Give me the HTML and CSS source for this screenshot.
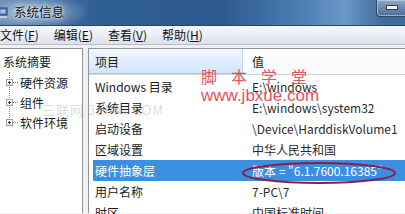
FILE: index.html
```html
<!DOCTYPE html>
<html lang="zh">
<head>
<meta charset="utf-8">
<link rel="stylesheet" href="styles.css">
</head>
<body>
<div class="window">
  <div class="titlebar">
    <svg class="app-icon" width="9" height="11" viewBox="0 0 9 11">
      <rect x="0" y="1" width="8" height="7" fill="#5a79b8" stroke="#2a3f70" stroke-width="1"/>
      <rect x="1.5" y="2.5" width="5" height="4" fill="#9fc2ee"/>
      <rect x="1" y="9" width="7" height="2" fill="#c9ced8"/>
    </svg>
    <span class="title">系统信息</span>
    <div class="min-btn"><span class="dash"></span></div>
  </div>
  <div class="menubar">
    <span class="menu">文件(<u>F</u>)</span>
    <span class="menu">编辑(<u>E</u>)</span>
    <span class="menu">查看(<u>V</u>)</span>
    <span class="menu">帮助(<u>H</u>)</span>
  </div>
  <div class="content">
    <div class="tree">
      <div class="tree-root">系统摘要</div>
      <div class="tree-children">
        <div class="node"><span class="box"></span><span class="hdots"></span><span class="label">硬件资源</span></div>
        <div class="node"><span class="box"></span><span class="hdots"></span><span class="label">组件</span></div>
        <div class="node"><span class="box"></span><span class="hdots"></span><span class="label">软件环境</span></div>
      </div>
    </div>
    <div class="list">
      <div class="head">
        <div class="hcell c1">项目</div>
        <div class="hcell c2">值</div>
      </div>
      <div class="row"><div class="c1">Windows 目录</div><div class="c2">E:\windows</div></div>
      <div class="row"><div class="c1">系统目录</div><div class="c2">E:\windows\system32</div></div>
      <div class="row"><div class="c1">启动设备</div><div class="c2">\Device\HarddiskVolume1</div></div>
      <div class="row"><div class="c1">区域设置</div><div class="c2">中华人民共和国</div></div>
      <div class="row sel"><div class="c1">硬件抽象层</div><div class="c2">版本 = "6.1.7600.16385"</div></div>
      <div class="row"><div class="c1">用户名称</div><div class="c2">7-PC\7</div></div>
      <div class="row"><div class="c1">时区</div><div class="c2">中国标准时间</div></div>
    </div>
  </div>
  <svg class="ellipse" width="156" height="24" viewBox="0 0 156 24">
    <ellipse cx="78" cy="12" rx="76" ry="10" fill="none" stroke="#8b1e45" stroke-width="2"/>
  </svg>
  <div class="wm-red">
    <div class="wm-cn">脚本学堂</div>
    <div class="wm-url">www.jbxue.com</div>
  </div>
  <div class="wm-gray">三联网 3LIAN.COM</div>
</div>
</body>
</html>
```

FILE: styles.css
```css
* { box-sizing: border-box; }
html, body { margin: 0; padding: 0; }
body {
  width: 405px;
  height: 214px;
  overflow: hidden;
  background: #f0f0f0;
  font-family: "Noto Sans CJK SC", "Noto Sans", sans-serif;
  font-size: 12px;
  color: #1a1a1a;
}
.window {
  position: relative;
  width: 405px;
  height: 214px;
  overflow: hidden;
}
.titlebar {
  height: 26px;
  display: flex;
  align-items: flex-start;
  border-bottom: 1px solid #27466b;
  background:
    radial-gradient(ellipse 60px 18px at 30px 12px, rgba(190,210,230,0.85), rgba(190,210,230,0) 100%),
    linear-gradient(90deg, #5a80ab 0%, #2f5e93 25%, #2d5a8e 55%, #4f7fb5 75%, #6b98c8 85%, #3f6a9c 95%);
}
.app-icon { margin: 7px 0 0 -1px; flex: none; }
.title {
  margin: 3px 0 0 6px;
  font-size: 12.5px;
  line-height: 18px;
  color: #111;
  text-shadow: 0 0 6px #e8eef6, 0 0 3px #e8eef6;
}
.min-btn {
  margin-left: auto;
  width: 32px;
  height: 17px;
  margin-right: -3px;
  border: 1px solid #33455f;
  border-top: none;
  border-bottom-left-radius: 4px;
  background: linear-gradient(180deg, #8fa8c8 0%, #6a88b0 50%, #4d6e98 100%);
  box-shadow: inset 0 0 0 1px rgba(220,230,245,0.5);
  display: flex;
  align-items: center;
  justify-content: flex-start;
  padding-left: 9px;
}
.dash {
  display: block;
  width: 10px;
  height: 3px;
  background: #f4f6fa;
  border: 1px solid #2d3f58;
  box-sizing: content-box;
  margin-top: -1px;
}
.menubar {
  height: 19px;
  display: flex;
  gap: 15px;
  padding-left: 0;
  align-items: center;
  background: linear-gradient(180deg, #f6f7fb 0%, #eceef6 50%, #dde1ee 100%);
  border-bottom: 1px solid #b9bdc8;
}
.menu { font-size: 12px; line-height: 16px; white-space: nowrap; color: #111; }
.menu u { text-decoration: underline; text-underline-offset: 1px; }
.content {
  display: flex;
  gap: 5px;
  padding-top: 3px;
  height: 168px;
}
.tree {
  width: 84px;
  flex: none;
  margin-left: -1px;
  background: #fff;
  border: 1px solid #8f959c;
  border-bottom: none;
  padding-top: 3px;
}
.tree-root {
  height: 20px;
  line-height: 20px;
  padding-left: 3px;
  white-space: nowrap;
}
.tree-children {
  position: relative;
  margin-left: 9px;
  border-left: 1px dotted #8a8a8a;
  height: 50px;
}
.node {
  height: 20px;
  display: flex;
  align-items: center;
  position: relative;
  white-space: nowrap;
}
.box {
  width: 7px;
  height: 7px;
  margin-left: -4px;
  border: 1px solid #9aa3ad;
  background: linear-gradient(#fff, #e4e8ee);
  position: relative;
  flex: none;
}
.box::before {
  content: "";
  position: absolute;
  left: 1px; top: 2px;
  width: 3px; height: 1px;
  background: #333;
}
.box::after {
  content: "";
  position: absolute;
  left: 2px; top: 1px;
  width: 1px; height: 3px;
  background: #333;
}
.hdots {
  width: 5px;
  border-top: 1px dotted #8a8a8a;
  flex: none;
}
.label { margin-left: 2px; }
.list {
  flex: 1;
  background: #fff;
  border-left: 1px solid #8f959c;
  border-top: 1px solid #8f959c;
  white-space: nowrap;
  min-width: 0;
}
.head {
  display: flex;
  height: 26px;
  border-bottom: 1px solid #d5d5d5;
  margin-bottom: 1px;
}
.hcell {
  line-height: 26px;
}
.head .c1 {
  background: linear-gradient(180deg, #f3f8fe 0%, #e1eefc 50%, #d2e5fa 100%);
  border-right: 1px solid #c5d5e8;
  border-bottom: 1px solid #a9c6e6;
}
.head .c2 {
  background: linear-gradient(180deg, #ffffff 0%, #f7f8fa 100%);
  flex: 1;
}
.row {
  display: flex;
  height: 21px;
  line-height: 21px;
  margin-left: 4px;
}
.c1 { width: 150px; padding-left: 2px; flex: none; }
.head .c1 { width: 154px; padding-left: 6px; }
.c2 { padding-left: 9px; }
.head .c2 { padding-left: 9px; }
.row .c1 { color: #1a1a1a; }
.row .c2 { color: #2a2a2a; }
.row.sel { background: #3a8fe2; }
.row.sel .c1, .row.sel .c2 { color: #fff; }
.ellipse {
  position: absolute;
  left: 241px;
  top: 161px;
}
.wm-red {
  position: absolute;
  left: 201px;
  top: 66px;
  color: #e0404f;
  opacity: 0.9;
}
.wm-cn {
  font-size: 16px;
  line-height: 20px;
  letter-spacing: 14px;
}
.wm-url {
  font-family: "Liberation Sans", sans-serif;
  font-size: 17px;
  line-height: 20px;
  margin-top: 0;
}
.wm-gray {
  position: absolute;
  left: 42px;
  top: 100px;
  font-size: 13px;
  color: rgba(150,150,150,0.35);
  white-space: nowrap;
  letter-spacing: 1px;
}
```
